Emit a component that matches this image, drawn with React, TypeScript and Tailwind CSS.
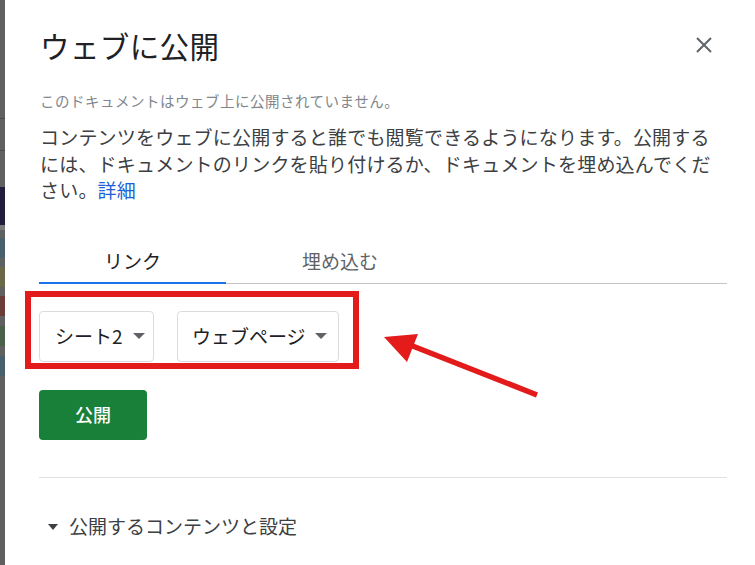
import React from "react";

const jp = { fontFamily: '"Noto Sans CJK JP", "Noto Sans", sans-serif' };

export default function App() {
  return (
    <div className="relative flex w-[755px] h-[565px] overflow-hidden bg-white" style={jp}>
      {/* background strip on left */}
      <div className="w-[5px] shrink-0 flex flex-col bg-[#5f6161]">
        <div className="h-[118px] bg-[#5f6161]" />
        <div className="h-[1px] bg-[#4a4c4c]" />
        <div className="h-[31px] bg-[#5f6161]" />
        <div className="h-[1px] bg-[#4a4c4c]" />
        <div className="h-[36px] bg-[#5f6161]" />
        <div className="h-[38px] bg-[#241c3c]" />
        <div className="h-[5px] bg-[#7a7a7a]" />
        <div className="h-[8px] bg-[#5f6161]" />
        <div className="h-[20px] bg-[#48606c]" />
        <div className="h-[9px] bg-[#5f6161]" />
        <div className="h-[20px] bg-[#6b6848]" />
        <div className="h-[9px] bg-[#5f6161]" />
        <div className="h-[20px] bg-[#6b3c38]" />
        <div className="h-[10px] bg-[#5f6161]" />
        <div className="h-[20px] bg-[#4a6048]" />
        <div className="h-[10px] bg-[#5f6161]" />
        <div className="h-[20px] bg-[#48606c]" />
        <div className="flex-1 bg-[#5e6060]" />
      </div>

      {/* dialog */}
      <div className="flex-1 flex flex-col pl-[35px] pr-[28px] pt-[27px]">
        <div className="flex items-center justify-between h-[36px]">
          <div className="text-[29.5px] leading-[36px] tracking-[0.4px] text-[#202124]">ウェブに公開</div>
          <button className="mr-[15px] w-[16px] h-[16px] flex items-center justify-center">
            <svg width="16" height="16" viewBox="0 0 16 16">
              <path d="M1 1 L15 15 M15 1 L1 15" stroke="#5f6368" strokeWidth="2" fill="none" />
            </svg>
          </button>
        </div>

        <div className="mt-[28px] text-[14.5px] leading-[20px] tracking-[0.5px] text-[#80868b]">
          このドキュメントはウェブ上に公開されていません。
        </div>

        <div className="mt-[13px] text-[19px] leading-[26.5px] tracking-[0.2px] text-[#3c4043] whitespace-nowrap">
          コンテンツをウェブに公開すると誰でも閲覧できるようになります。公開する
          <br />
          には、ドキュメントのリンクを貼り付けるか、ドキュメントを埋め込んでくだ
          <br />
          さい。<span className="text-[#1a62d6]">詳細</span>
        </div>

        {/* tabs */}
        <div className="mt-[37px] flex h-[43px] border-b border-[#c4c4c4] -ml-[1px]">
          <div className="relative w-[187px] flex items-center justify-center text-[19px] text-[#202124]">
            リンク
            <div className="absolute left-0 right-0 -bottom-[1px] h-[2px] bg-[#1a73e8]" />
          </div>
          <div className="w-[228px] flex items-center justify-center text-[19px] text-[#5f6368]">
            埋め込む
          </div>
        </div>

        {/* dropdowns */}
        <div className="relative mt-[27px] flex gap-[23px] -ml-[1px]">
          <div className="absolute -left-[14px] -top-[20px] w-[334px] h-[78px] border-[6px] border-[#e31b1b]" />
          <div className="relative flex items-center h-[51px] w-[115px] pl-[15px] gap-[10px] rounded-[4px] border border-[#dadce0] bg-white text-[19px] text-[#202124]">
            <span>シート2</span>
            <svg width="12" height="6" viewBox="0 0 12 6">
              <path d="M0 0 L12 0 L6 6 Z" fill="#5f6368" />
            </svg>
          </div>
          <div className="relative flex items-center h-[51px] w-[162px] pl-[14px] gap-[9px] rounded-[4px] border border-[#dadce0] bg-white text-[19px] text-[#202124]">
            <span>ウェブページ</span>
            <svg width="12" height="6" viewBox="0 0 12 6">
              <path d="M0 0 L12 0 L6 6 Z" fill="#5f6368" />
            </svg>
          </div>
        </div>

        <div className="mt-[28px] -ml-[1px]">
          <button className="w-[108px] h-[50px] rounded-[4px] bg-[#188038] text-white text-[18px] font-medium flex items-center justify-center">
            公開
          </button>
        </div>

        <div className="mt-[37px] h-[1px] bg-[#dfe1e5] -ml-[1px]" />

        <div className="mt-[37px] flex items-center h-[24px] text-[19px] text-[#3c4043]">
          <svg className="ml-[8px]" width="10" height="6" viewBox="0 0 10 6">
            <path d="M0 0 L10 0 L5 6 Z" fill="#3c4043" />
          </svg>
          <span className="ml-[11px]">公開するコンテンツと設定</span>
        </div>
      </div>

      {/* annotation arrow */}
      <svg className="absolute left-0 top-0 pointer-events-none" width="755" height="565">
        <line x1="537" y1="395" x2="405" y2="343" stroke="#e31b1b" strokeWidth="5.5" />
        <path d="M384 337 L418 334 L407 362 Z" fill="#e31b1b" />
      </svg>
    </div>
  );
}
